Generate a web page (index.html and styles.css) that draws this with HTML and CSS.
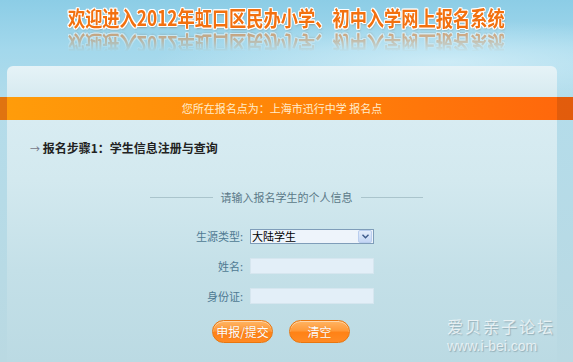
FILE: index.html
```html
<!DOCTYPE html>
<html lang="zh-CN">
<head>
    <meta charset="UTF-8">
    <meta name="viewport" content="width=device-width, initial-scale=1.0">
    <title>虹口区民办小学、初中入学网上报名系统</title>
    <link rel="stylesheet" href="styles.css">
</head>
<body>
    <div class="header">
        <div class="title">欢迎进入2012年虹口区民办小学、初中入学网上报名系统</div>
    </div>

    <div class="card-top"></div>

    <div class="notice-row">
        <div class="notice">您所在报名点为：上海市迅行中学 报名点</div>
    </div>

    <div class="card-body">
        <div class="step"><span class="step-arrow">→</span> 报名步骤1：学生信息注册与查询</div>

        <div class="legend">
            <span class="legend-line"></span>
            <span class="legend-text">请输入报名学生的个人信息</span>
            <span class="legend-line"></span>
        </div>

        <form class="fields">
            <label class="field-label" for="source">生源类型:</label>
            <div class="select-box">
                <select id="source" class="select">
                    <option>大陆学生</option>
                    <option>港澳台学生</option>
                    <option>外籍学生</option>
                </select>
                <span class="select-arrow">
                    <svg width="7" height="5" viewBox="0 0 7 5"><path d="M0.5 0.8 L3.5 3.8 L6.5 0.8" fill="none" stroke="#3d5a8a" stroke-width="1.4"/></svg>
                </span>
            </div>

            <label class="field-label" for="name">姓名:</label>
            <input id="name" class="input" type="text">

            <label class="field-label" for="idcard">身份证:</label>
            <input id="idcard" class="input" type="text">
        </form>

        <div class="buttons">
            <button class="button" type="button">申报/提交</button>
            <button class="button" type="button">清空</button>
        </div>
    </div>

    <div class="watermark">
        <div class="watermark-cn">爱贝亲子论坛</div>
        <div class="watermark-en">www.i-bei.com</div>
    </div>
</body>
</html>
```

FILE: styles.css
```css
body {
    margin: 0;
    height: 362px;
    overflow: hidden;
    position: relative;
    font-family: "Noto Sans CJK SC", "Liberation Sans", sans-serif;
    background:
        radial-gradient(ellipse 420px 60px at 78% 62px, rgba(235, 250, 255, 0.55), rgba(235, 250, 255, 0) 70%),
        linear-gradient(#8ccde6 0, #a3d8ec 50px, #b4dcea 110px, #bad9e2 362px);
}
.header {
    height: 66px;
    text-align: center;
}
.title {
    display: inline-block;
    margin-top: 4px;
    font-size: 21px;
    line-height: 26px;
    font-weight: bold;
    color: #f2700f;
    transform: scaleX(0.82);
    text-shadow:
        1px 0 0 #fff, -1px 0 0 #fff, 0 1px 0 #fff, 0 -1px 0 #fff,
        1px 1px 0 #fff, -1px -1px 0 #fff, 1px -1px 0 #fff, -1px 1px 0 #fff,
        1px 2px 2px rgba(120, 90, 60, 0.35);
    -webkit-box-reflect: below 2px linear-gradient(transparent 25%, rgba(255, 255, 255, 0.55));
}
.card-top {
    height: 31px;
    margin: 0 16px 0 7px;
    border-radius: 6px 6px 0 0;
    background: linear-gradient(#e6f3f7, #d6eaf0);
}
.notice-row {
    background: linear-gradient(90deg, #e07410, #e25c0c);
}
.notice {
    height: 23px;
    line-height: 23px;
    margin: 0 16px 0 7px;
    background: linear-gradient(90deg, #ff9c0a, #ff8508 50%, #ff680c);
    color: #ffeccb;
    font-size: 11px;
    text-align: center;
}
.card-body {
    height: 242px;
    margin: 0 16px 0 7px;
    padding-top: 20px;
    box-sizing: border-box;
    background: linear-gradient(#d8ecf2 0, #d3e9ef 60px, #c4e0e8 150px, #bbdae3 242px);
}
.step {
    padding-left: 23px;
    font-size: 12px;
    line-height: 16px;
    font-weight: bold;
    color: #222;
}
.step-arrow {
    font-weight: normal;
    color: #778;
    font-size: 10px;
}
.legend {
    display: flex;
    align-items: center;
    width: 273px;
    margin: 32px 0 0 143px;
    height: 16px;
}
.legend-line {
    flex: 1;
    height: 1px;
    background: #aac4cc;
}
.legend-text {
    padding: 0 8px;
    font-size: 11px;
    color: #5b7988;
}
.fields {
    display: grid;
    grid-template-columns: 236px 124px;
    grid-auto-rows: 30px;
    column-gap: 7px;
    align-items: center;
    margin: 16px 0 0 0;
}
.field-label {
    text-align: right;
    font-size: 11px;
    color: #4f7a93;
}
.select-box {
    display: flex;
    align-items: center;
    height: 15px;
    box-sizing: border-box;
    border: 1px solid #7f9db9;
    background: #eef4fb;
}
.select {
    flex: 1;
    -webkit-appearance: none;
    appearance: none;
    border: none;
    background: transparent;
    padding: 0 0 0 1px;
    height: 13px;
    font-family: "Noto Sans CJK SC", sans-serif;
    font-size: 11px;
    line-height: 13px;
    color: #000;
    outline: none;
}
.select-arrow {
    display: flex;
    align-items: center;
    justify-content: center;
    width: 12px;
    height: 11px;
    margin-right: 1px;
    border: 1px solid #b9cdee;
    border-radius: 2px;
    background: linear-gradient(#e3ecfb, #c4d6f5);
}
.input {
    height: 16px;
    box-sizing: border-box;
    border: 1px solid #d6e6ef;
    background: #e3eff8;
    padding: 0 2px;
    font-size: 11px;
    outline: none;
}
.buttons {
    display: flex;
    gap: 16px;
    margin: 9px 0 0 205px;
}
.button {
    width: 61px;
    height: 23px;
    padding: 0;
    border: 1px solid #e8760f;
    border-radius: 12px;
    background: linear-gradient(#ffb463, #ff9a3a 45%, #ff8216 55%, #ff8a24);
    color: #fff;
    font-family: "Noto Sans CJK SC", sans-serif;
    font-size: 12px;
    cursor: pointer;
    text-shadow: 0 0 1px rgba(180, 80, 0, 0.5);
    box-shadow: inset 0 1px 0 rgba(255, 230, 200, 0.7);
}
.button:hover {
    background: linear-gradient(#ffbe78, #ff8a24);
}
.watermark {
    position: absolute;
    left: 447px;
    top: 316px;
    color: rgba(255, 255, 255, 0.7);
    text-shadow: 1px 1px 1px rgba(90, 110, 120, 0.4);
}
.watermark-cn {
    font-size: 16px;
    line-height: 20px;
    letter-spacing: 2px;
}
.watermark-en {
    margin-top: 2px;
    font-family: "Liberation Sans", sans-serif;
    font-size: 14px;
    line-height: 16px;
}
```
